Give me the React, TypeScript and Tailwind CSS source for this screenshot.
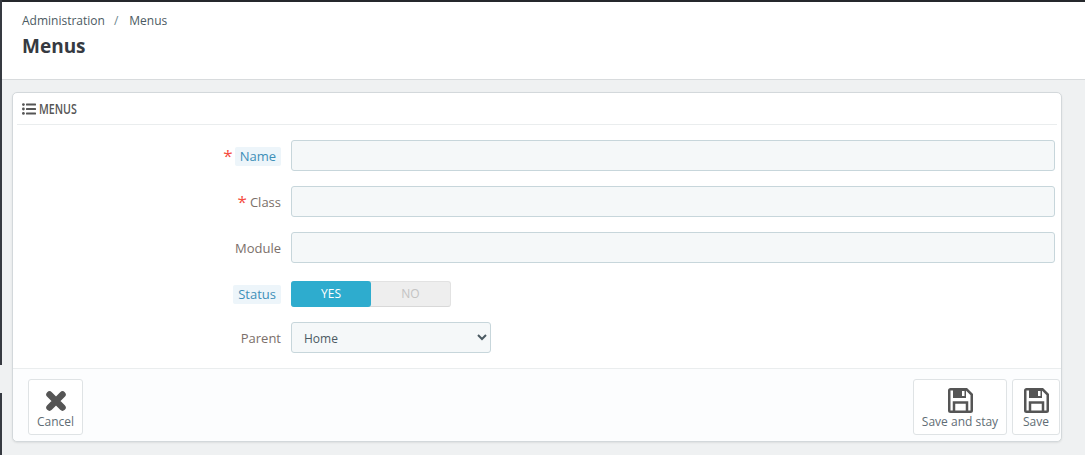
function FieldLabel({ text, required, hint, nudge }: { text: string; required?: boolean; hint?: boolean; nudge?: boolean }) {
  return (
    <div className={`w-[268px] flex items-center justify-end shrink-0 text-[13px] ${nudge ? "pt-[2px]" : ""}`}>
      {required && <span className={`text-[#f54c3e] text-[17px] leading-none relative top-[-1px] ${hint ? "mr-[2px]" : "mr-[3px]"}`}>*</span>}
      {hint ? (
        <span className="bg-[#edf5fa] text-[#3d8fb8] rounded-[2px] px-[5px] h-[19px] leading-[19px]">{text}</span>
      ) : (
        <span className="text-[#7b6f6a]">{text}</span>
      )}
    </div>
  );
}

function TextRow({ text, required, hint }: { text: string; required?: boolean; hint?: boolean }) {
  return (
    <div className="flex h-[31px] mb-[15px]">
      <FieldLabel text={text} required={required} hint={hint} nudge />
      <div className="ml-[10px] w-[764px] h-[31px] rounded-[3px] border border-[#c7d6db] bg-[#f5f8f9]" />
    </div>
  );
}

function SaveIcon() {
  return (
    <svg width="25" height="25" viewBox="0 0 25 25" className="text-[#555]">
      <path d="M2.5 1.25H18.5L23.75 6.5V22.5a1.25 1.25 0 0 1-1.25 1.25H2.5a1.25 1.25 0 0 1-1.25-1.25V2.5a1.25 1.25 0 0 1 1.25-1.25z" fill="none" stroke="currentColor" strokeWidth="2.5" />
      <path d="M5 1.5H18V10H5z" fill="currentColor" />
      <path d="M14 3H16.5V8H14z" fill="#fff" />
      <path d="M6 23V14.5H19V23" fill="none" stroke="currentColor" strokeWidth="2.5" />
    </svg>
  );
}

function CancelIcon() {
  return (
    <svg width="22" height="22" viewBox="0 0 22 22" className="text-[#555]">
      <path d="M4.5 4.5L17.5 17.5M17.5 4.5L4.5 17.5" fill="none" stroke="currentColor" strokeWidth="6.5" strokeLinecap="round" />
    </svg>
  );
}

function ListIcon() {
  return (
    <svg width="14" height="12" viewBox="0 0 14 12" className="text-[#555]">
      <circle cx="1.4" cy="1.6" r="1.4" fill="currentColor" />
      <circle cx="1.4" cy="6" r="1.4" fill="currentColor" />
      <circle cx="1.4" cy="10.4" r="1.4" fill="currentColor" />
      <rect x="4" y="0.6" width="10" height="2" rx="0.5" fill="currentColor" />
      <rect x="4" y="5" width="10" height="2" rx="0.5" fill="currentColor" />
      <rect x="4" y="9.4" width="10" height="2" rx="0.5" fill="currentColor" />
    </svg>
  );
}

function ActionButton({ icon, label, className }: { icon: React.ReactNode; label: string; className: string }) {
  return (
    <button className={`h-[56px] rounded-[3px] border border-[#dfe3e5] bg-white flex flex-col items-center pt-[8px] text-[12px] leading-[17px] text-[#5f6d75] ${className}`}>
      <span className="h-[25px] flex items-center justify-center">{icon}</span>
      <span>{label}</span>
    </button>
  );
}

export default function App() {
  return (
    <div className="h-[455px] w-[1085px] overflow-hidden bg-[#eff1f2] font-['Open_Sans',sans-serif] relative">
      {/* Dark edge of the page behind */}
      <div className="h-[2px] bg-[#25282c]" />
      <div className="absolute left-0 top-0 w-[2px] h-[365px] bg-[#363a41]" />
      <div className="absolute left-0 top-[393px] w-[2px] h-[62px] bg-[#363a41]" />

      {/* Header */}
      <div className="h-[78px] bg-white border-b border-[#d8dbdd] pl-[22px] pt-[10px]">
        <div className="flex items-center text-[12px] leading-[17px] text-[#4b5a62]">
          <span>Administration</span>
          <span className="ml-[9px] mr-[11px] text-[#6c868e]">/</span>
          <span>Menus</span>
        </div>
        <h1 className="mt-[5px] text-[19px] leading-[24px] font-bold text-[#363a41]">Menus</h1>
      </div>

      {/* Panel */}
      <div className="mt-[12px] ml-[12px] w-[1050px] h-[350px] bg-white rounded-[5px] border border-[#d3d8db] shadow-[0_1px_2px_rgba(0,0,0,0.08)] flex flex-col">
        <div className="mx-[4px] h-[32px] border-b border-[#eaedee] flex items-center pl-[5px]">
          <ListIcon />
          <span className="ml-[3px] text-[14px] font-semibold text-[#555] scale-x-[0.76] origin-left">MENUS</span>
        </div>

        <div className="flex-1 pt-[15px]">
          <TextRow text="Name" required hint />
          <TextRow text="Class" required />
          <TextRow text="Module" />

          <div className="flex h-[26px] mt-[18px] mb-[15px]">
            <FieldLabel text="Status" hint />
            <div className="ml-[10px] w-[160px] h-[26px] flex rounded-[3px] bg-[#eeeeee] border border-[#e2e2e2] border-b-[#d8d8d8] text-[12px]">
              <div className="w-[80px] -my-[1px] -ml-[1px] rounded-[3px] bg-[#2eacce] text-white flex items-center justify-center">YES</div>
              <div className="flex-1 flex items-center justify-center text-[#c3c3c3]">NO</div>
            </div>
          </div>

          <div className="flex h-[31px]">
            <FieldLabel text="Parent" nudge />
            <select className="ml-[10px] w-[200px] h-[31px] rounded-[3px] border border-[#c7d6db] bg-[#f5f8f9] pl-[8px] pt-[2px] text-[12px] text-[#4b5a62]">
              <option>Home</option>
            </select>
          </div>
        </div>

        {/* Footer actions */}
        <div className="h-[73px] border-t border-[#eaedee] bg-[#fcfdfe] rounded-b-[5px] pl-[15px] pr-[1px] pt-[10px] flex items-start">
          <ActionButton icon={<CancelIcon />} label="Cancel" className="w-[55px]" />
          <div className="flex-1" />
          <ActionButton icon={<SaveIcon />} label="Save and stay" className="w-[94px]" />
          <ActionButton icon={<SaveIcon />} label="Save" className="w-[48px] ml-[5px]" />
        </div>
      </div>
    </div>
  );
}
